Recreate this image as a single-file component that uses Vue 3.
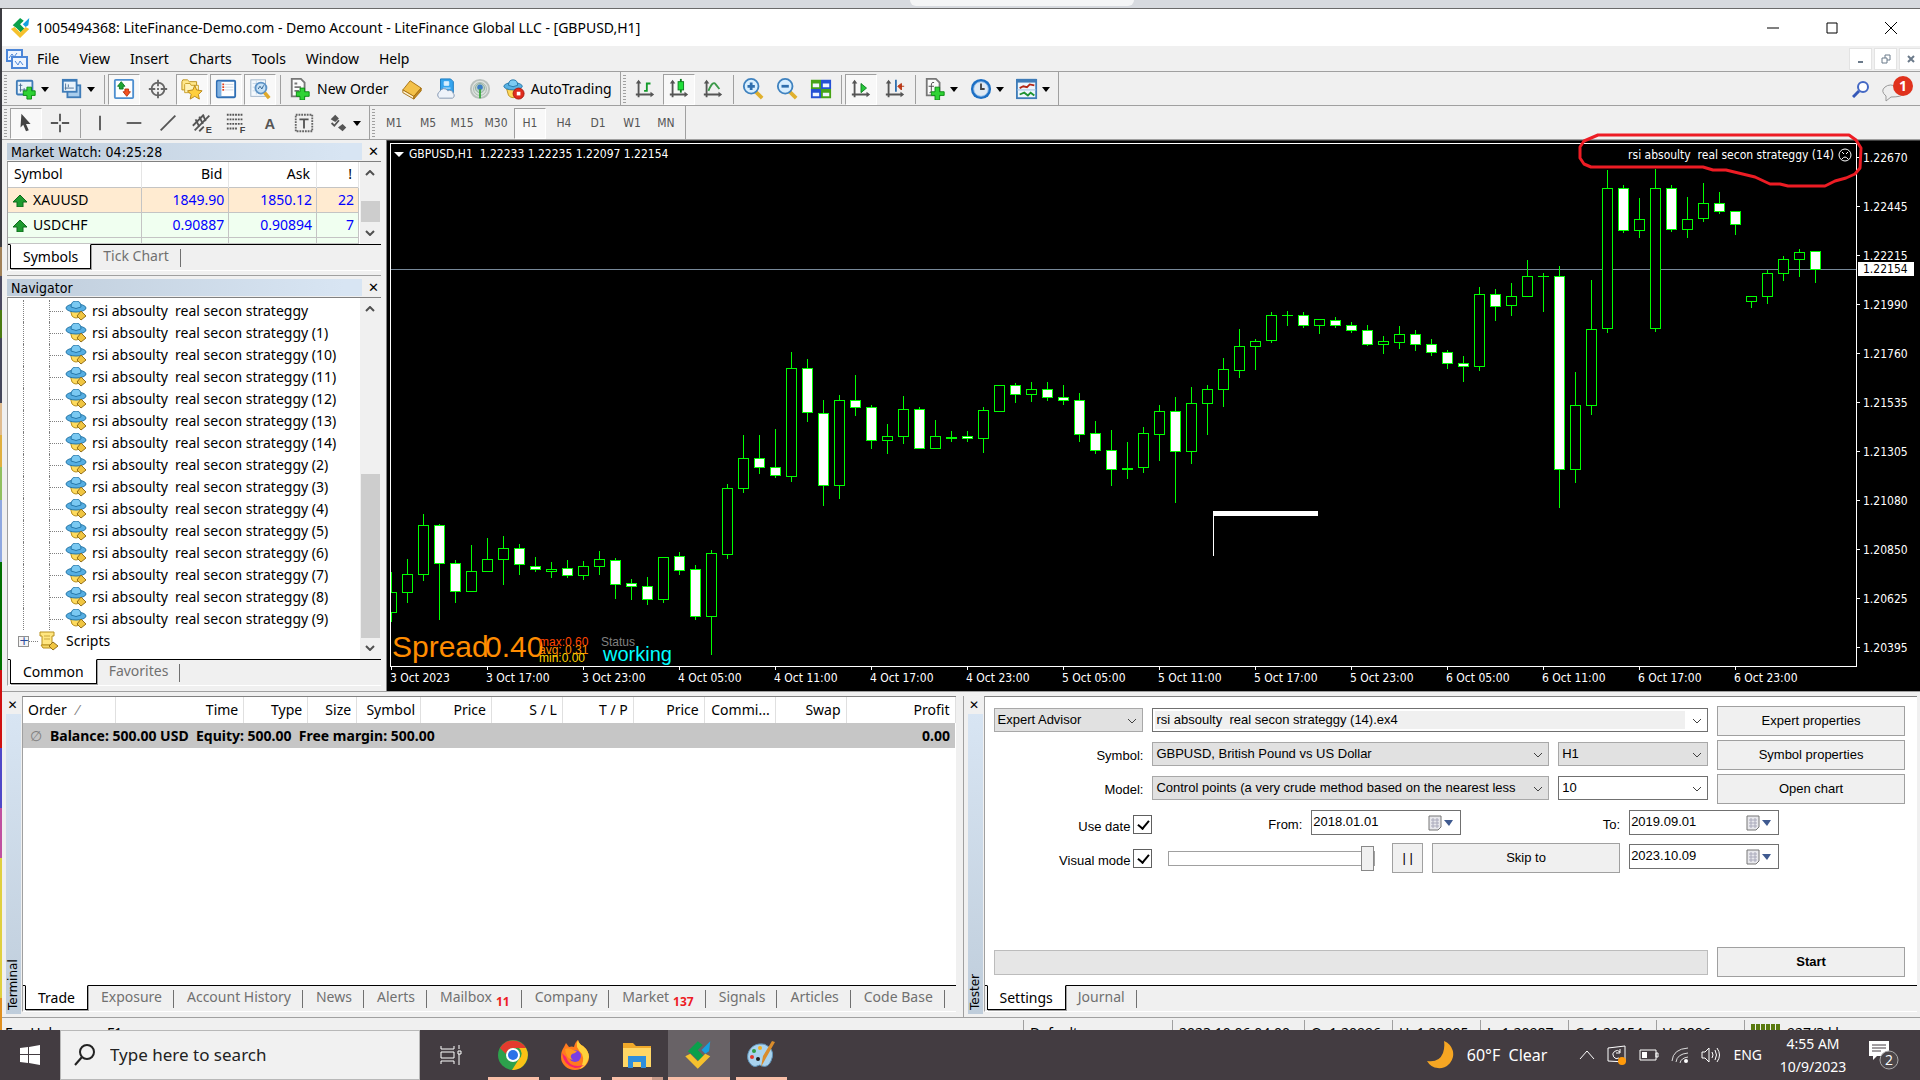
<script setup>
import { ref } from 'vue'

const menus = ['File', 'View', 'Insert', 'Charts', 'Tools', 'Window', 'Help']

const axes = '<path d="M5 4v17M2 18h17" stroke="#555" stroke-width="2"/><path d="M5 2l-3 4h6zM22 18l-4-3v6z" fill="#555"/>'
const win = '<rect x="2" y="3" width="17" height="15" rx="1" fill="#eaf3fb" stroke="#3f7cb8" stroke-width="2"/>'
const plus = '<path d="M13 10h5v4h4v5h-4v4h-5v-4H9v-5h4z" fill="#2fd334" stroke="#0a8a12"/>'
const icons = {
  newchart: win + '<path d="M6 6v9M5 13h9M4 8h4M10 11v4" stroke="#4a6f94"/>' + plus,
  profiles: '<rect x="7" y="8" width="14" height="13" fill="#a9cdec" stroke="#3f7cb8" stroke-width="2"/><rect x="2" y="2" width="15" height="13" fill="#eaf3fb" stroke="#3f7cb8" stroke-width="2"/><path d="M2 3h15" stroke="#3f7cb8" stroke-width="2"/><path d="M5 6v7M4 11h10M8 7v3" stroke="#4a6f94"/>',
  market: '<rect x="2" y="2" width="20" height="20" rx="1" fill="#fdfeff" stroke="#4d8fd0" stroke-width="2"/><path d="M9 4l4 5h-2v3H7V9H5z" fill="#1fa535" stroke="#0c7a1e"/><path d="M15 20l4-5h-2v-3h-4v3h-2z" fill="#f4511e" stroke="#b7320c"/>',
  target: '<circle cx="12" cy="12" r="7" fill="none" stroke="#666" stroke-width="2"/><path d="M12 2v7M12 15v7M2 12h7M15 12h7M12 11v2" stroke="#666" stroke-width="2"/>',
  navigator: '<path d="M1 4l1-2h5l2 2h8v9H1z" fill="#ffe88a" stroke="#b98d16"/><path d="M4 7l1-1h5l1 2h8v8H4z" fill="#fff3b8" stroke="#c79c25"/><path d="M15 8l2 5 6 1-4 4 1 5-5-3-5 3 1-5-4-4 6-1z" fill="#ffcf3d" stroke="#b58313"/>',
  terminal: '<rect x="2" y="3" width="20" height="18" rx="1" fill="#fdfeff" stroke="#2f6fb5" stroke-width="2"/><rect x="3" y="4" width="4" height="16" fill="#7fb2e3"/><path d="M8 7h2M8 10h2M8 13h2" stroke="#e2401c" stroke-width="2"/><path d="M11 7h9M11 10h9M11 13h9" stroke="#c9d4e0"/>',
  tester: '<rect x="2" y="2" width="16" height="18" fill="#f4f9fd" stroke="#9fb3c8"/><path d="M4 6h12M4 10h12M4 14h12M8 3v15" stroke="#c4d5e6"/><circle cx="13" cy="11" r="6" fill="#bcdcf5" fill-opacity=".8" stroke="#5d93c6" stroke-width="2"/><path d="M10 12l2-3 2 3 2-4" fill="none" stroke="#31618f"/><path d="M17 16l5 6" stroke="#e0a92b" stroke-width="4"/>',
  order: '<path d="M3 1h10l4 4v15H3z" fill="#fbfbfb" stroke="#777" stroke-width="2"/><path d="M6 6h3M6 10h7M6 14h5" stroke="#777" stroke-width="2"/><path d="M12 11h5v4h5v5h-5v4h-5v-4H8v-5h4z" fill="#2fd334" stroke="#0a8a12"/>',
  book: '<path d="M2 13L10 3l12 8-8 9z" fill="#f3c14a" stroke="#a46e10"/><path d="M2 13l12 7v3L2 16z" fill="#fff2cf" stroke="#a46e10"/><path d="M14 20l8-9v3l-8 9z" fill="#c68a1d" stroke="#a46e10"/>',
  news: '<path d="M6 1h11l3 3v12H6z" fill="#35a4ee" stroke="#1676bd"/><path d="M10 4h5v4h-5zM9 11h8" fill="#d8effe" stroke="#d8effe"/><path d="M5 22a4 4 0 010-7 5 5 0 019-1 4 4 0 016 3 3 3 0 01-1 5z" fill="#eef3fa" stroke="#7f93ae"/>',
  signal: '<circle cx="12" cy="12" r="10" fill="#dde2df" stroke="#b9c0bc" stroke-width="2"/><circle cx="12" cy="12" r="7" fill="none" stroke="#a3b3aa"/><circle cx="12" cy="11" r="5" fill="#b9cfc8" stroke="#8fab9a"/><circle cx="12" cy="10" r="3" fill="#3b7dc4"/><path d="M12 12v10" stroke="#39a83f" stroke-width="2"/>',
  auto: '<path d="M4 12h14l-2 7q-5 5-10 0z" fill="#ffd95b" stroke="#b88d1c"/><ellipse cx="11" cy="9" rx="10" ry="4" fill="#58b2e4" stroke="#2476a8"/><path d="M6 8q0-6 5-6t5 6q-5 3-10 0z" fill="#7ccbf3" stroke="#2476a8"/><circle cx="17" cy="17" r="6" fill="#e02b1d" stroke="#a5160c"/><path d="M15 15h4v4h-4z" fill="#fff"/>',
  bars: axes + '<path d="M14 5v10M14 6h4M11 14h3" stroke="#129a2a" stroke-width="2" fill="none"/>',
  candles: axes + '<path d="M14 1v15" stroke="#0b7d1d" stroke-width="2"/><rect x="11" y="4" width="6" height="9" fill="#1fe03a" stroke="#0b7d1d"/>',
  line: axes + '<path d="M7 14q5-12 8-7l4 5" stroke="#3c9a49" stroke-width="2" fill="none"/>',
  zoomin: '<path d="M14 14l8 8" stroke="#e0b02e" stroke-width="4"/><circle cx="10" cy="9" r="8" fill="#d8efff" stroke="#3f82bf" stroke-width="2"/><path d="M10 5v8M6 9h8" stroke="#2f6fae" stroke-width="3"/>',
  zoomout: '<path d="M14 14l8 8" stroke="#e0b02e" stroke-width="4"/><circle cx="10" cy="9" r="8" fill="#d8efff" stroke="#3f82bf" stroke-width="2"/><path d="M6 9h8" stroke="#2f6fae" stroke-width="3"/>',
  tile: '<path d="M1 2h11v10H1zM12 12h11v10H12z" fill="#47a316"/><path d="M12 2h11v10H12zM1 12h11v10H1z" fill="#2450d4"/><path d="M3 6h7v4H3zM14 6h7v4h-7zM3 16h7v4H3zM14 16h7v4h-7z" fill="#eef6ff"/>',
  scroll: axes + '<path d="M12 6l6 5-6 5z" fill="#27c83b" stroke="#0b7d1d"/>',
  shift: axes + '<path d="M13 2v13" stroke="#2f6fae" stroke-width="2"/><path d="M22 9h-5M19 6l-4 3 4 4z" fill="#d2401c" stroke="#b0300f"/>',
  indicator: '<path d="M3 1h10l4 4v14H3z" fill="#fbfbfb" stroke="#777" stroke-width="2"/><path d="M11 5q-3-1-3 3v6q0 2-2 2M5 9h6" stroke="#444" fill="none"/><path d="M12 10h5v5h5v4h-5v5h-5v-5H8v-4h4z" fill="#2fd334" stroke="#0a8a12"/>',
  clock: '<circle cx="12" cy="12" r="11" fill="#1c6fc4"/><circle cx="12" cy="12" r="8" fill="#dfe9f3" stroke="#88b8e8"/><path d="M12 6v6h4" stroke="#444" stroke-width="2" fill="none"/>',
  template: '<rect x="1" y="2" width="21" height="20" fill="#eef6fd" stroke="#3f7cb8" stroke-width="2"/><path d="M1 3h21" stroke="#3f7cb8" stroke-width="4"/><path d="M4 11l4-2 4 1 3-3 5 1" stroke="#b32615" stroke-width="2" fill="none"/><path d="M1 13h21" stroke="#9dbfe0"/><path d="M4 18l5-2 4 3 3-3 4 3" stroke="#1d9230" stroke-width="2" fill="none"/>',
  cursor: '<path d="M7 2l10 11h-5l3 7-3 1-3-7-3 3z" fill="#444"/>',
  cross: '<path d="M12 2v8M12 14v8M2 12h8M14 12h8" stroke="#555" stroke-width="2"/>',
  vline: '<path d="M12 4v16" stroke="#555" stroke-width="2"/>',
  hline: '<path d="M4 12h16" stroke="#555" stroke-width="2"/>',
  trend: '<path d="M4 20L20 4" stroke="#555" stroke-width="2"/>',
  channel: '<path d="M2 15L14 3M4 20L20 4M9 21l5-5" stroke="#555" stroke-width="2"/><path d="M5 8l4 8M9 5l4 8M13 3l3 7" stroke="#555" stroke-width="2"/><text x="16" y="23" font-size="10" font-weight="700" font-family="Liberation Sans, sans-serif" fill="#444">E</text>',
  fibo: '<path d="M2 3h18M2 8h18M2 13h18M2 18h12" stroke="#555" stroke-width="2" stroke-dasharray="2 1"/><text x="16" y="23" font-size="10" font-weight="700" font-family="Liberation Sans, sans-serif" fill="#444">F</text>',
  text: '<text x="6" y="18" font-size="16" font-weight="700" font-family="Liberation Sans, sans-serif" fill="#555">A</text>',
  label: '<rect x="3" y="3" width="18" height="18" fill="none" stroke="#666" stroke-width="2" stroke-dasharray="2 1"/><path d="M7 8h10M12 8v10" stroke="#555" stroke-width="2"/>',
  arrows: '<path d="M4 8l5-5 4 4-4 4zM12 17l5-4 4 4-4 4z" fill="#555"/><path d="M5 12l3 3 5-6" stroke="#555" stroke-width="2" fill="none"/>'
}

const standardBar = [
  { icon: 'newchart', caret: true }, { icon: 'profiles', caret: true }, { sep: true },
  { icon: 'market', on: true }, { icon: 'target' }, { icon: 'navigator', on: true }, { icon: 'terminal', on: true }, { icon: 'tester', on: true }, { sep: true },
  { icon: 'order', label: 'New Order' }, { icon: 'book' }, { icon: 'news' }, { icon: 'signal' }, { icon: 'auto', label: 'AutoTrading' }
]
const chartBar = [
  { icon: 'bars' }, { icon: 'candles', on: true }, { icon: 'line' }, { sep: true },
  { icon: 'zoomin' }, { icon: 'zoomout' }, { icon: 'tile' }, { sep: true },
  { icon: 'scroll', on: true }, { icon: 'shift' }, { sep: true },
  { icon: 'indicator', caret: true }, { icon: 'clock', caret: true }, { icon: 'template', caret: true }
]
const drawBar = [
  { icon: 'cursor', on: true }, { icon: 'cross' }, { sep: true },
  { icon: 'vline' }, { icon: 'hline' }, { icon: 'trend' }, { icon: 'channel' }, { icon: 'fibo' },
  { icon: 'text' }, { icon: 'label' }, { icon: 'arrows', caret: true }
]
const bars = [[standardBar, chartBar], [drawBar]]
const periods = ['M1', 'M5', 'M15', 'M30', 'H1', 'H4', 'D1', 'W1', 'MN']

const quotes = [
  { symbol: 'XAUUSD', bid: '1849.90', ask: '1850.12', spread: 22, cls: 'warm' },
  { symbol: 'USDCHF', bid: '0.90887', ask: '0.90894', spread: 7, cls: 'cool' }
]
const experts = ['', ' (1)', ' (10)', ' (11)', ' (12)', ' (13)', ' (14)', ' (2)', ' (3)', ' (4)', ' (5)', ' (6)', ' (7)', ' (8)', ' (9)']

// high, low, body top, body bottom, bearish
const TOP = 144
const candles = [
  [572, 621, 592, 612, 0], [559, 602, 574, 592, 0], [514, 580, 525, 574, 0], [524, 619, 525, 563, 1], [560, 602, 563, 591, 1],
  [545, 591, 571, 591, 0], [538, 571, 559, 571, 0], [536, 584, 548, 559, 0], [544, 574, 548, 564, 1], [557, 571, 566, 569, 1],
  [562, 577, 569, 571, 0], [560, 577, 568, 575, 1], [561, 579, 566, 575, 0], [551, 574, 559, 566, 0], [558, 598, 560, 584, 1],
  [579, 599, 583, 586, 1], [577, 604, 586, 599, 1], [557, 602, 557, 599, 0], [552, 574, 556, 570, 1], [565, 619, 569, 616, 1],
  [550, 654, 553, 616, 0], [484, 558, 488, 554, 0], [435, 492, 458, 488, 0], [435, 473, 458, 467, 1], [429, 477, 467, 475, 1],
  [352, 481, 368, 476, 0], [359, 421, 368, 412, 1], [400, 505, 413, 485, 1], [395, 498, 400, 485, 0], [375, 415, 400, 407, 1],
  [405, 448, 407, 440, 1], [424, 453, 436, 440, 0], [396, 443, 409, 436, 0], [407, 448, 409, 448, 1], [420, 448, 436, 448, 0],
  [431, 441, 437, 438, 0], [431, 441, 436, 438, 1], [407, 452, 410, 438, 0], [385, 411, 385, 411, 0], [383, 402, 385, 394, 1],
  [382, 401, 389, 394, 0], [382, 400, 389, 397, 1], [385, 404, 397, 400, 1], [393, 441, 400, 434, 1], [421, 453, 433, 450, 1],
  [430, 485, 450, 469, 1], [442, 478, 468, 469, 0], [427, 472, 433, 467, 0], [405, 460, 411, 434, 0], [397, 502, 411, 451, 1],
  [387, 463, 403, 451, 0], [385, 434, 389, 403, 0], [358, 406, 369, 389, 0], [329, 377, 346, 370, 0], [339, 369, 341, 346, 0],
  [312, 342, 315, 340, 0], [311, 325, 315, 315, 0], [312, 327, 315, 325, 1], [319, 333, 319, 325, 0], [317, 327, 320, 325, 1],
  [322, 332, 325, 330, 1], [325, 345, 330, 344, 1], [336, 353, 341, 344, 0], [326, 348, 334, 342, 0], [330, 350, 334, 344, 1],
  [339, 355, 344, 352, 1], [350, 368, 352, 363, 1], [356, 381, 363, 366, 1], [287, 370, 294, 366, 0], [289, 320, 294, 306, 1],
  [283, 315, 296, 305, 0], [260, 296, 276, 296, 0], [273, 311, 276, 276, 0], [266, 507, 276, 469, 1], [372, 482, 405, 469, 0],
  [280, 414, 329, 405, 0], [170, 332, 188, 328, 0], [185, 232, 188, 230, 1], [198, 237, 219, 230, 0], [169, 331, 188, 328, 0],
  [185, 231, 188, 229, 1], [197, 237, 219, 229, 0], [183, 221, 203, 218, 0], [192, 213, 203, 211, 1], [211, 234, 211, 224, 1],
  [296, 307, 296, 301, 0], [270, 303, 273, 296, 0], [256, 280, 259, 273, 0], [249, 276, 252, 259, 0], [251, 282, 251, 269, 1]
].map(([h, l, t, b, down], i) => ({ x: i * 16, h: h - TOP, l: l - TOP, t: t - TOP, b: b - TOP, down }))

const times = ['3 Oct 2023', '3 Oct 17:00', '3 Oct 23:00', '4 Oct 05:00', '4 Oct 11:00', '4 Oct 17:00', '4 Oct 23:00', '5 Oct 05:00', '5 Oct 11:00', '5 Oct 17:00', '5 Oct 23:00', '6 Oct 05:00', '6 Oct 11:00', '6 Oct 17:00', '6 Oct 23:00']
const prices = ['1.22670', '1.22445', '1.22215', '1.21990', '1.21760', '1.21535', '1.21305', '1.21080', '1.20850', '1.20625', '1.20395']

const orderCols = [
  ['Order', 93], ['Time', 128], ['Type', 64], ['Size', 49], ['Symbol', 64], ['Price', 71], ['S / L', 71],
  ['T / P', 71], ['Price', 71], ['Commi...', 71], ['Swap', 71], ['Profit', 109]
]
const terminalTabs = [['Exposure'], ['Account History'], ['News'], ['Alerts'], ['Mailbox', 11], ['Company'], ['Market', 137], ['Signals'], ['Articles'], ['Code Base']]

const status = ['Default', '2023.10.06 04:00', 'O: 1.20996', 'H: 1.22005', 'L: 1.20987', 'C: 1.22154', 'V: 2806']

const useDate = ref(true)
const visual = ref(true)
const speed = ref(100)
const expertFile = ref('rsi absoulty  real secon strateggy (14).ex4')
const dateFrom = ref('2018.01.01')
const dateTo = ref('2019.09.01')
const dateSkip = ref('2023.10.09')
</script>

<template>
  <div class="screen">
    <div class="behind"><span class="behind-tab"></span></div>
    <div class="middle">
      <div class="edge"></div>
      <div class="window">
        <header class="title">
          <svg class="logo" viewBox="0 0 24 24"><path d="M7 12L3 9l8-8 4 3-4 4 5 5-4 4z" fill="#0aa04b"/><path d="M14 8l7-7-1 8-3 2z" fill="#159fe0"/><path d="M1 13l4-2 6 6 6-6 4 2-10 10z" fill="#f5c12d"/></svg>
          <h1>1005494368: LiteFinance-Demo.com - Demo Account - LiteFinance Global LLC - [GBPUSD,H1]</h1>
          <div class="win-btns">
            <button aria-label="Minimize"><svg viewBox="0 0 12 12"><path d="M0 6h12" /></svg></button>
            <button aria-label="Maximize"><svg viewBox="0 0 12 12"><path d="M1 1h10v10H1z" /></svg></button>
            <button aria-label="Close"><svg viewBox="0 0 12 12"><path d="M0 0l12 12M12 0L0 12" /></svg></button>
          </div>
        </header>
        <nav class="menu">
          <svg class="menu-icon" viewBox="0 0 22 20"><rect x="1" y="1" width="15" height="11" fill="#eef5ff" stroke="#4c86d8" stroke-width="2"/><path d="M3 9l3-4 2 3 3-4" stroke="#4c86d8" fill="none"/><rect x="6" y="8" width="15" height="11" fill="#eef5ff" stroke="#4c86d8" stroke-width="2"/><path d="M9 12l3 4 2-4 3 4" stroke="#4c86d8" fill="none"/></svg>
          <button v-for="m in menus" :key="m">{{ m }}</button>
          <div class="mdi">
            <button aria-label="Minimize chart"><svg viewBox="0 0 10 10"><path d="M2 8h5" /></svg></button>
            <button aria-label="Restore chart"><svg class="thin" viewBox="0 0 10 10"><path d="M1 4h5v5H1zM4 4V1h5v5H6" /></svg></button>
            <button aria-label="Close chart"><svg viewBox="0 0 10 10"><path d="M2 2l6 6M8 2l-6 6" /></svg></button>
          </div>
        </nav>
        <div v-for="(row, r) in bars" :key="r" class="toolrow">
          <div v-for="(group, g) in row" :key="g" class="toolgroup">
            <i class="grip"></i>
            <template v-for="(t, i) in group" :key="i">
              <i v-if="t.sep" class="sep"></i>
              <button v-else class="tool" :class="{ on: t.on }" :aria-label="t.label || t.icon">
                <span class="cell"><svg viewBox="0 0 24 24" v-html="icons[t.icon]"></svg></span>
                <span v-if="t.label" class="tool-label">{{ t.label }}</span>
                <i v-if="t.caret" class="caret"></i>
              </button>
            </template>
          </div>
          <div v-if="r === 1" class="toolgroup">
            <i class="grip"></i>
            <button v-for="p in periods" :key="p" class="tool period" :class="{ on: p === 'H1' }"><span class="cell">{{ p }}</span></button>
          </div>
          <div v-if="r === 0" class="tool-right">
            <button aria-label="Search"><svg width="18" height="18" viewBox="0 0 18 18"><path d="M1 17l6-6" stroke="#3558b8" stroke-width="3"/><circle cx="11" cy="7" r="5" fill="#fff" stroke="#4468c4" stroke-width="2"/></svg></button>
            <button aria-label="Notifications"><svg width="34" height="28" viewBox="0 0 34 28"><path d="M5 12q5-4 12 0t6 7-12 3l-5 4v-5q-6-5-1-9z" fill="#eee" stroke="#999"/><circle cx="23" cy="11" r="10" fill="#e0321d"/><text x="23" y="16" text-anchor="middle" font-size="14" font-weight="700" fill="#fff" font-family="Open Sans, sans-serif">1</text></svg></button>
          </div>
        </div>

        <main class="work">
          <aside class="left">
            <section class="panel">
              <div class="panel-head"><h2>Market Watch: 04:25:28</h2><button aria-label="Close Market Watch">✕</button></div>
              <div class="panel-body">
                <div class="list">
                  <table class="quotes">
                    <colgroup><col style="width:38%" /><col style="width:25%" /><col style="width:25%" /><col /></colgroup>
                    <thead><tr><th>Symbol</th><th>Bid</th><th>Ask</th><th>!</th></tr></thead>
                    <tbody>
                      <tr v-for="q in quotes" :key="q.symbol" :class="q.cls">
                        <td><svg class="up" viewBox="0 0 14 12"><path d="M7 0l7 7h-4v5H4V7H0z" fill="#1d9a2e" stroke="#0d6b1b"/></svg>{{ q.symbol }}</td>
                        <td>{{ q.bid }}</td><td>{{ q.ask }}</td><td>{{ q.spread }}</td>
                      </tr>
                      <tr class="cool sliver"><td></td><td></td><td></td><td></td></tr>
                    </tbody>
                  </table>
                  <div class="scroll"><svg viewBox="0 0 10 6"><path d="M1 5l4-4 4 4"/></svg><i class="thumb market-thumb"></i><svg viewBox="0 0 10 6"><path d="M1 1l4 4 4-4"/></svg></div>
                </div>
                <div class="tabs"><button class="active">Symbols</button><button>Tick Chart</button></div>
              </div>
            </section>
            <section class="panel nav-panel">
              <div class="panel-head"><h2>Navigator</h2><button aria-label="Close Navigator">✕</button></div>
              <div class="panel-body">
                <div class="list">
                  <ul class="tree">
                    <li v-for="e in experts" :key="e" class="leaf">
                      <i class="branch"></i>
                      <svg viewBox="0 0 22 20"><path d="M5 8h11l-1 7q-4 4-8 0z" fill="#ffdb5c" stroke="#b8901f"/><ellipse cx="11" cy="7" rx="10" ry="4" fill="#56aee2" stroke="#2577a9"/><path d="M6 6q0-6 5-6t5 6q-5 3-10 0z" fill="#7ac9f2" stroke="#2577a9"/><path d="M16 10l5 5-5 4-4-4z" fill="#f0c541" stroke="#94701a"/></svg>
                      <span>rsi absoulty&nbsp; real secon strateggy{{ e }}</span>
                    </li>
                    <li class="root"><i class="expand">+</i><i class="dots"></i>
                      <svg viewBox="0 0 20 20"><path d="M1 1h14v4h-2v9H3V5H1z" fill="#ffe680" stroke="#b8901f"/><path d="M5 5h6M5 8h6" stroke="#c9a640"/><path d="M2 14h12v3H4z" fill="#f5d665" stroke="#b8901f"/><path d="M14 11l5 4-5 4-4-4z" fill="#f0c541" stroke="#94701a"/></svg>
                      <span>Scripts</span></li>
                  </ul>
                  <div class="scroll"><svg viewBox="0 0 10 6"><path d="M1 5l4-4 4 4"/></svg><i class="thumb nav-thumb"></i><svg viewBox="0 0 10 6"><path d="M1 1l4 4 4-4"/></svg></div>
                </div>
                <div class="tabs"><button class="active">Common</button><button>Favorites</button></div>
              </div>
            </section>
          </aside>

          <section class="chart">
            <div class="pane">
              <svg class="plot" viewBox="0 0 1465 522" preserveAspectRatio="xMinYMin slice">
                <rect x="0" y="125" width="1465" height="1" fill="#778899" />
                <g v-for="c in candles" :key="c.x">
                  <rect :x="c.x" :y="c.h" width="1" :height="c.l - c.h + 1" fill="#0f0" />
                  <rect :x="c.x - 5" :y="c.t" width="11" :height="c.b - c.t + 1" fill="#0f0" />
                  <rect v-if="c.b - c.t > 1" :x="c.x - 4" :y="c.t + 1" width="9" :height="c.b - c.t - 1" :fill="c.down ? '#fff' : '#000'" />
                </g>
                <path d="M822 367h105v5H823v40h-1z" fill="#fff" />
                <g class="osd">
                  <text x="1" y="513" font-size="30" fill="#ff8c00">Spread</text>
                  <text x="94" y="513" font-size="30" fill="#ff8c00">0.40</text>
                  <text x="148" y="502" font-size="12" fill="#ff4500">max:0.60</text>
                  <text x="148" y="510" font-size="12" fill="#ff8c00">avg: 0.31</text>
                  <text x="148" y="518" font-size="12" fill="#ffd700">min:0.00</text>
                  <text x="210" y="502" font-size="12" fill="#808080">Status</text>
                  <text x="212" y="517" font-size="20" fill="#0ff">working</text>
                </g>
              </svg>
              <div class="chart-title"><i class="white-caret"></i>GBPUSD,H1&nbsp; 1.22233 1.22235 1.22097 1.22154</div>
              <div class="expert-name">rsi absoulty&nbsp; real secon strateggy (14)
                <svg viewBox="0 0 14 14"><circle cx="7" cy="7" r="6" fill="none" stroke="#fff"/><path d="M4 4l2 2M10 4L8 6M4 11q3-4 6 0" stroke="#fff" fill="none"/></svg>
              </div>
              <svg class="marker" width="290" height="58" viewBox="0 0 290 58"><path d="M24 4h251l7 5 5 8-1 20-5 6-9 4-11 3-10 5h-37l-8-2h-10l-15-7-29-7h-13l-10-3H17l-7-3-4-6V16l4-6z" fill="none" stroke="#ed1c24" stroke-width="3" stroke-linejoin="round"/></svg>
            </div>
            <div class="prices"><span v-for="p in prices" :key="p">{{ p }}</span><b>1.22154</b></div>
            <div class="times"><span v-for="t in times" :key="t">{{ t }}</span></div>
          </section>
        </main>

        <div class="bottom">
          <section class="dock terminal">
            <div class="side"><button aria-label="Close Terminal">✕</button><h2>Terminal</h2></div>
            <div class="dock-body">
              <div class="sheet">
                <table class="orders">
                  <colgroup><col v-for="(c, i) in orderCols" :key="i" :style="{ width: c[1] / 9.33 + '%' }" /></colgroup>
                  <thead><tr><th v-for="(c, i) in orderCols" :key="i">{{ c[0] }}<i v-if="i === 0">⁄</i></th></tr></thead>
                  <tbody><tr><td colspan="11"><i class="zero">∅</i>Balance: 500.00 USD&nbsp; Equity: 500.00&nbsp; Free margin: 500.00</td><td>0.00</td></tr></tbody>
                </table>
              </div>
              <div class="tabs">
                <button class="active">Trade</button>
                <button v-for="t in terminalTabs" :key="t[0]">{{ t[0] }}<sub v-if="t[1]">{{ t[1] }}</sub></button>
              </div>
            </div>
          </section>
          <section class="dock tester">
            <div class="side"><button aria-label="Close Tester">✕</button><h2>Tester</h2></div>
            <div class="dock-body">
              <form class="sheet form" @submit.prevent>
                <div class="grid main-grid">
                  <span class="combo gray"><select aria-label="Program type"><option>Expert Advisor</option></select><svg viewBox="0 0 10 6"><path d="M1 1l4 4 4-4"/></svg></span>
                  <span class="combo file span2"><input v-model="expertFile" aria-label="Expert file" /><svg viewBox="0 0 10 6"><path d="M1 1l4 4 4-4"/></svg></span>
                  <button>Expert properties</button>
                  <label for="symbol">Symbol:</label>
                  <span class="combo gray"><select id="symbol"><option>GBPUSD, British Pound vs US Dollar</option></select><svg viewBox="0 0 10 6"><path d="M1 1l4 4 4-4"/></svg></span>
                  <span class="combo gray"><select aria-label="Period"><option>H1</option></select><svg viewBox="0 0 10 6"><path d="M1 1l4 4 4-4"/></svg></span>
                  <button>Symbol properties</button>
                  <label for="model">Model:</label>
                  <span class="combo gray"><select id="model"><option>Control points (a very crude method based on the nearest less</option></select><svg viewBox="0 0 10 6"><path d="M1 1l4 4 4-4"/></svg></span>
                  <span class="combo"><select aria-label="Spread"><option>10</option></select><svg viewBox="0 0 10 6"><path d="M1 1l4 4 4-4"/></svg></span>
                  <button>Open chart</button>
                </div>
                <div class="grid date-grid">
                  <label class="check">Use date<input v-model="useDate" type="checkbox" /></label>
                  <label for="from">From:</label>
                  <span class="combo date"><input id="from" v-model="dateFrom" /><svg viewBox="0 0 26 16"><path d="M1 1h12v11l-3 3H1z" fill="#e8e8ec" stroke="#777"/><path d="M3 5h8M3 8h8M3 11h8M5 3v10M9 3v10" stroke="#aab"/><path d="M16 5h9l-4 6z" fill="#3f5a90" stroke="none"/></svg></span>
                  <label for="to">To:</label>
                  <span class="combo date"><input id="to" v-model="dateTo" /><svg viewBox="0 0 26 16"><path d="M1 1h12v11l-3 3H1z" fill="#e8e8ec" stroke="#777"/><path d="M3 5h8M3 8h8M3 11h8M5 3v10M9 3v10" stroke="#aab"/><path d="M16 5h9l-4 6z" fill="#3f5a90" stroke="none"/></svg></span>
                  <i></i>
                  <label class="check">Visual mode<input v-model="visual" type="checkbox" /></label>
                  <div class="play">
                    <input v-model="speed" type="range" aria-label="Speed" />
                    <button class="pause">| |</button>
                    <button class="skip">Skip to</button>
                  </div>
                  <span class="combo date"><input v-model="dateSkip" aria-label="Skip to date" /><svg viewBox="0 0 26 16"><path d="M1 1h12v11l-3 3H1z" fill="#e8e8ec" stroke="#777"/><path d="M3 5h8M3 8h8M3 11h8M5 3v10M9 3v10" stroke="#aab"/><path d="M16 5h9l-4 6z" fill="#3f5a90" stroke="none"/></svg></span>
                </div>
                <div class="grid start-grid"><div class="progress"></div><button class="start">Start</button></div>
              </form>
              <div class="tabs"><button class="active">Settings</button><button>Journal</button></div>
            </div>
          </section>
        </div>
        <footer class="status"><span class="hint">For Help, press F1</span><span v-for="s in status" :key="s">{{ s }}</span><span><i class="traffic"></i>927/3 kb</span></footer>
      </div>
    </div>

    <div class="taskbar">
      <button class="start-btn" aria-label="Start"><svg width="20" height="20" viewBox="0 0 20 20"><path d="M0 3l8-1v7H0zM9 2l11-2v9H9zM0 10h8v8l-8-1zM9 10h11v10L9 18z" fill="#fff"/></svg></button>
      <div class="search"><svg width="22" height="22" viewBox="0 0 22 22"><circle cx="13" cy="8" r="7" fill="none" stroke="#222" stroke-width="2"/><path d="M8 13l-7 8" stroke="#222" stroke-width="2"/></svg><input placeholder="Type here to search" aria-label="Search" /></div>
      <button class="task" aria-label="Task view"><svg width="22" height="20" viewBox="0 0 22 20"><path d="M1 1v3h13V1M1 19v-3h13v3M1 7h13v6H1zM19 0v4M19 9v11M18 6h3v3h-3z" fill="none" stroke="#fff" stroke-width="1"/></svg></button>
      <button class="task open" aria-label="Chrome"><svg width="30" height="30" viewBox="0 0 30 30"><circle cx="15" cy="15" r="15" fill="#2da14c"/><path d="M2 8a15 15 0 0126 0H15a7 7 0 00-7 6z" fill="#e33b2e"/><path d="M28 8a15 15 0 01-14 22l7-11a7 7 0 000-11z" fill="#fbc116"/><circle cx="15" cy="15" r="7" fill="#fff"/><circle cx="15" cy="15" r="5" fill="#2a72e8"/></svg></button>
      <button class="task open" aria-label="Firefox"><svg width="30" height="30" viewBox="0 0 30 30"><path d="M4 7l2-4 3 4q3-1 5 0 1-5 4-7 1 4 5 6 6 5 6 11a14 13 0 01-28 0Q1 11 4 7z" fill="#ff7a1e"/><path d="M18 0q1 4 5 6 6 5 6 11-2 9-9 12 5-8 2-15-3-3-5-7-1-4 1-7z" fill="#ffd03b"/><path d="M2 13q2 13 13 15 6 0 9-3-14 4-18-8z" fill="#f7256b"/><circle cx="15" cy="16" r="6" fill="#7a3fe0"/><path d="M5 9q4-2 8 1l4 1q-2 3-5 3-3 3 1 6-7-1-8-11z" fill="#ff9a1e"/></svg></button>
      <button class="task open split" aria-label="File Explorer"><svg width="30" height="26" viewBox="0 0 30 26"><path d="M1 3V1h10l3 3h15v20H1z" fill="#f0a92a"/><path d="M1 6h28v19H1z" fill="#ffd766"/><path d="M6 14h18v12h-5v-6h-8v6H6z" fill="#2f8fdc"/></svg></button>
      <button class="task open active" aria-label="LiteFinance"><svg width="30" height="30" viewBox="0 0 24 24"><path d="M7 12L3 9l8-8 4 3-4 4 5 5-4 4z" fill="#0aa04b"/><path d="M14 8l7-7-1 8-3 2z" fill="#159fe0"/><path d="M1 13l4-2 6 6 6-6 4 2-10 10z" fill="#f5c12d"/></svg></button>
      <button class="task open" aria-label="Paint"><svg width="30" height="30" viewBox="0 0 30 30"><path d="M13 4C4 5-1 15 3 22q4 6 8 4 3-2 5 0 6 2 9-5 4-9-2-14-4-4-10-3z" fill="#a9d3ee" stroke="#5f93b8"/><circle cx="8" cy="11" r="2" fill="#2f9e44"/><circle cx="14" cy="8" r="2" fill="#f2b01e"/><circle cx="6" cy="17" r="2" fill="#e2382b"/><circle cx="12" cy="19" r="2" fill="#222"/><path d="M26 1l3 1-9 16-5 9 2-11z" fill="#d98c2b"/></svg></button>
      <div class="tray">
        <svg width="28" height="28" viewBox="0 0 28 28"><path d="M17 0a14 14 0 11-17 20Q12 22 16 12q2-6 1-12z" fill="#f6a623"/></svg>
        <span class="weather">60°F&nbsp; Clear</span>
        <svg class="chev" width="16" height="10" viewBox="0 0 16 10"><path d="M1 9l7-8 7 8" fill="none" stroke="#fff"/></svg>
        <svg width="20" height="20" viewBox="0 0 20 20"><path d="M1 3l17-2v16L1 16zM13 7a4 4 0 10-1 6M13 4v4h-4" fill="none" stroke="#fff"/><circle cx="15" cy="16" r="4" fill="#ff9a0a"/></svg>
        <svg width="20" height="12" viewBox="0 0 20 12"><path d="M1 1h16v10H1zM17 4h2v4h-2z" fill="none" stroke="#fff"/><path d="M3 3h5v6H3z" fill="#fff"/></svg>
        <svg width="18" height="18" viewBox="0 0 18 18"><path d="M1 15Q2 3 17 2M5 16q1-8 12-9M9 17q1-5 8-6" fill="none" stroke="#ddd"/><circle cx="15" cy="15" r="2" fill="#fff"/></svg>
        <svg width="20" height="16" viewBox="0 0 20 16"><path d="M1 5h3l4-4v14l-4-4H1zM11 5q2 3 0 6M14 3q3 5 0 10M16 1q5 7 0 14" fill="none" stroke="#fff"/></svg>
        <span class="lang">ENG</span>
        <time>4:55 AM<br />10/9/2023</time>
        <svg class="note" width="32" height="32" viewBox="0 0 32 32"><path d="M1 2h20v15H9l-4 4v-4H1z" fill="#fff"/><path d="M4 6h14M4 9h14M4 12h9" stroke="#443d42"/><circle cx="21" cy="21" r="9" fill="#4c474a" stroke="#aaa"/><text x="21" y="26" text-anchor="middle" font-size="14" fill="#fff" font-family="Open Sans, sans-serif">2</text></svg>
      </div>
    </div>
  </div>
</template>

<style>
body { margin: 0; }
</style>

<style scoped>
.screen { min-height: 100vh; display: flex; flex-direction: column; background: #f0f0f0; color: #000; font: 14px/20px "Noto Sans", "Open Sans", sans-serif; overflow: hidden; }
.screen * { box-sizing: border-box; }
i { font-style: normal; }
h1, h2 { margin: 0; font-weight: 400; white-space: nowrap; }
button { font: inherit; color: inherit; background: none; border: 0; padding: 0; margin: 0; }
input, select { font: inherit; color: inherit; margin: 0; border: 0; padding: 0; background: none; outline: 0; min-width: 0; }
svg { display: block; flex: none; }

.behind { height: 8px; background: #d7dadf; display: flex; justify-content: center; }
.behind-tab { width: 224px; margin-left: 124px; height: 6px; background: #f4f5f6; border-radius: 0 0 6px 6px; }
.middle { flex: 1; display: flex; }
.edge { width: 2px; background: linear-gradient(#3c3c42 0 239px, #a08058 0 268px, #4b4960 0 302px, #4a7a10 0 330px, #44465a 0 395px, #e0bc90 0 427px, #e0b040 0 459px, #90c060 0 492px, #8fa8e0 0 554px, #007000 0 662px, #d01010 0 740px, #5048c8 0 800px, #c050a0 0 850px, #e0d040 0 990px, #e09020 0); }
.window { flex: 1; min-width: 0; display: flex; flex-direction: column; border-top: 1px solid #6a6a6a; }

.title { height: 37px; background: #fff; display: flex; align-items: center; padding-left: 8px; }
.logo { width: 22px; height: 22px; }
.title h1 { margin-left: 4px; font-size: 14px; flex: 1; }
.win-btns { display: flex; }
.win-btns button { width: 59px; display: grid; place-items: center; }
.win-btns svg { width: 12px; height: 12px; fill: none; stroke: #000; }

.menu { height: 26px; display: flex; align-items: center; padding-left: 4px; border-bottom: 1px solid #a0a0a0; }
.menu-icon { width: 22px; height: 20px; margin-right: -1px; }
.menu button { padding: 0 10px; }
.mdi { margin-left: auto; display: flex; gap: 2px; margin-right: -2px; }
.menu .mdi button { width: 23px; height: 22px; padding: 0; background: #fff; border: 1px solid #e3e3e3; display: grid; place-items: center; }
.mdi svg { width: 10px; height: 10px; fill: none; stroke: #6b7a8a; stroke-width: 2; }
.mdi .thin { stroke-width: 1; }

.toolrow { height: 34px; display: flex; border-bottom: 1px solid #a0a0a0; }
.toolgroup { display: flex; align-items: center; padding: 1px 2px 0 0; border-right: 1px solid #a0a0a0; }
.grip { width: 3px; height: 28px; margin: 0 2px 0 2px; background: repeating-linear-gradient(#a0a0a0 0 1px, #f0f0f0 1px 3px); }
.sep { width: 1px; height: 29px; margin: 0 2px 0 3px; background: #a0a0a0; }
.tool { height: 31px; display: flex; align-items: center; }
.cell { width: 34px; height: 31px; display: grid; place-items: center; }
.cell svg { width: 22px; height: 22px; }
.on .cell { width: 32px; margin: 0 1px; background: #f8f8f8; border: 1px solid #a0a0a0; border-right-color: #fff; border-bottom-color: #fff; }
.tool-label { margin-right: 6px; white-space: nowrap; }
.caret { border: 4px solid transparent; border-top: 5px solid #000; border-bottom: 0; margin: 0 6px 0 -2px; }
.period { font: 12px/16px "DejaVu Sans Condensed", "Noto Sans", sans-serif; color: #555; }
.tool-right { margin-left: auto; display: flex; align-items: center; gap: 10px; padding-right: 6px; }

.work { height: 551px; display: flex; }
.left { width: 385px; padding: 3px 5px 5px; border-right: 1px solid #808080; display: flex; flex-direction: column; gap: 4px; }
.panel { display: flex; flex-direction: column; }
.nav-panel { flex: 1; border-top: 1px solid #a0a0a0; padding-top: 3px; }
.panel-head { height: 17px; display: flex; align-items: center; justify-content: space-between; background: linear-gradient(90deg, #bfcddb, #d8e5f3 95%) no-repeat 0 0 / calc(100% - 19px) 100%; }
.panel-head h2 { font: 14px/16px "DejaVu Sans Condensed", "Noto Sans", sans-serif; padding-left: 4px; }
.panel-head button { font: 13px/16px "DejaVu Sans", sans-serif; width: 15px; }
.panel-body { flex: 1; display: flex; flex-direction: column; margin-top: 1px; border-top: 1px solid #808080; border-left: 1px solid #a0a0a0; border-bottom: 1px solid #fff; }
.list { flex: 1; display: flex; background: #fff; border-bottom: 1px solid #000; overflow: hidden; }
.scroll { width: 22px; background: #f0f0f0; display: flex; flex-direction: column; align-items: center; justify-content: space-between; padding: 8px 2px 8px 1px; border-left: 1px solid #fff; }
.scroll svg { width: 10px; height: 6px; fill: none; stroke: #505050; stroke-width: 2; }
.thumb { width: 19px; background: #cdcdcd; }
.market-thumb { height: 21px; margin-top: 16px; }
.nav-thumb { height: 164px; margin-top: auto; margin-bottom: 7px; }
.quotes { flex: 1; border-collapse: collapse; table-layout: fixed; height: 82px; }
.quotes th { height: 25px; font-weight: 400; text-align: right; padding: 0 6px; border-right: 1px solid #e5e5e5; }
.quotes th:first-child { text-align: left; }
.quotes td { height: 25px; padding: 0 4px; text-align: right; color: #00f; border: solid #c4c4c4; border-width: 1px 1px 1px 0; }
.quotes td:first-child { text-align: left; color: #000; }
.quotes .sliver td { height: 6px; }
.warm { background: #ffebd1; }
.cool { background: #f0fff0; }
.up { display: inline-block; width: 14px; height: 12px; margin: 0 6px 0 1px; vertical-align: -2px; }
.tabs { height: 26px; display: flex; align-items: stretch; margin-top: -1px; padding-left: 2px; color: #707070; }
.tabs button { position: relative; padding: 0 12px; height: 24px; white-space: nowrap; }
.terminal .tabs button:not(.active) { padding: 0 12px 0 13px; }
.tabs button:not(.active)::after { content: ""; position: absolute; right: 0; top: 5px; bottom: 1px; width: 1px; background: #707070; }
.tabs .active { background: #fff; color: #000; border: 1px solid #000; border-top-color: #fff; height: 25px; box-shadow: 1px 1px 0 #a0a0a0; }
.tabs sub { color: #ed1c24; font-size: 12px; font-weight: 700; line-height: 0; margin-left: 4px; vertical-align: -4px; }
.tree { flex: 1; list-style: none; margin: 0; padding: 2px 0 5px 15px; }
.tree li { height: 22px; display: flex; align-items: center; white-space: pre; }
.leaf { border-left: 1px dotted #808080; }
.branch { width: 15px; height: 22px; margin-left: 25px; border-left: 1px dotted #808080; background: repeating-linear-gradient(90deg, #808080 0 1px, #fff 1px 2px) no-repeat 0 11px / 100% 1px; }
.leaf svg { width: 22px; height: 20px; margin-right: 5px; margin-left: 1px; }
.root svg { width: 20px; height: 20px; margin-right: 7px; }
.expand { width: 11px; height: 11px; margin-left: -5px; border: 1px solid #909090; background: #f4f4f4; color: #2a4a9a; font: 12px/8px "DejaVu Sans", sans-serif; text-align: center; }
.dots { width: 9px; height: 1px; background: repeating-linear-gradient(90deg, #808080 0 1px, #fff 1px 2px); margin-right: 1px; }

.chart { flex: 1; min-width: 0; background: #000; border-top: 1px solid #404040; padding: 2px 0 0 3px; display: grid; grid-template: 524px 1fr / 1fr 63px; color: #fff; font: 12px/14px "DejaVu Sans Condensed", "Noto Sans", sans-serif; }
.pane { position: relative; border: 1px solid #fff; min-width: 0; }
.plot { width: 100%; height: 522px; shape-rendering: crispEdges; }
.osd { font-family: "Liberation Sans", Arial, sans-serif; }
.chart-title { position: absolute; left: 3px; top: 3px; display: flex; align-items: center; gap: 5px; }
.white-caret { border: 5px solid transparent; border-top-color: #fff; border-bottom: 0; }
.expert-name { position: absolute; right: 4px; top: 4px; display: flex; align-items: center; gap: 4px; }
.expert-name svg { width: 14px; height: 14px; }
.marker { position: absolute; right: -8px; top: -13px; z-index: 2; }
.prices { position: relative; padding-top: 8px; display: flex; flex-direction: column; gap: 35px; }
.prices span { height: 14px; padding-left: 6px; background: linear-gradient(#fff, #fff) no-repeat 0 6px / 3px 1px; }
.prices b { position: absolute; left: 1px; top: 119px; height: 14px; width: 56px; padding-left: 5px; font-weight: 400; background: #fff; color: #000; }
.times { display: flex; overflow: hidden; }
.times span { width: 96px; flex: none; padding-top: 4px; background: linear-gradient(#fff, #fff) no-repeat 1px 0 / 1px 3px; }

.bottom { flex: 1; display: flex; border-top: 1px solid #a0a0a0; padding-top: 4px; background: #f0f0f0; }
.dock { display: flex; padding: 0 3px; min-width: 0; }
.terminal { flex: 1; border-right: 1px solid #a0a0a0; padding-right: 7px; }
.tester { flex: 1; }
.side { width: 17px; padding-bottom: 3px; display: flex; flex-direction: column; align-items: center; }
.side button { font: 12px/16px "DejaVu Sans", sans-serif; height: 18px; margin-right: 2px; }
.side h2 { flex: 1; width: 15px; writing-mode: vertical-rl; transform: rotate(180deg); font: 12px/15px "DejaVu Sans", sans-serif; padding-top: 4px; background: linear-gradient(0deg, #d8e5f3, #bfcddb); }
.dock-body { flex: 1; min-width: 0; display: flex; flex-direction: column; border-top: 1px solid #808080; border-left: 1px solid #a0a0a0; border-bottom: 1px solid #fff; margin-bottom: 5px; }
.sheet { flex: 1; background: #fff; border-bottom: 1px solid #000; }
.orders { width: 100%; table-layout: fixed; border-collapse: collapse; }
.orders th { height: 26px; font-weight: 400; text-align: right; padding: 0 5px; border-right: 1px solid #e0e0e0; white-space: nowrap; }
.orders th:first-child { text-align: left; }
.orders th i { margin-left: 10px; color: #808080; }
.orders td { height: 25px; padding: 0 5px; background: #c6c6c6; font-weight: 700; text-align: right; }
.orders td:first-child { text-align: left; padding-left: 7px; }
.zero { color: #808080; font-weight: 400; margin-right: 8px; }

.form { font: 13px/16px "Liberation Sans", Arial, sans-serif; padding: 9px 12px 8px 9px; display: flex; flex-direction: column; gap: 4px; }
.grid { display: grid; gap: 4px 9px; align-items: center; }
.main-grid { grid-template-columns: 150fr 397fr 150fr 188fr; }
.date-grid { grid-template-columns: 159fr 141fr 150fr 150fr 150fr 117fr; margin-top: 1px; }
.span2 { grid-column: span 2; }
.form button { height: 30px; border: 1px solid #a0a0a0; background: #f0f0f0; text-align: center; }
.form label { text-align: right; padding-top: 2px; }
.combo { position: relative; height: 24px; display: flex; border: 1px solid #707070; background: #fff; margin-bottom: 2px; }
.combo.gray { background: #e1e1e1; border-color: #a8a8a8; }
.combo select, .combo input { width: 100%; appearance: none; padding: 0 3px; }
.combo select { padding-right: 22px; }
.combo svg { position: absolute; right: 5px; top: 9px; width: 10px; height: 6px; fill: none; stroke: #404040; pointer-events: none; }
.file input { margin: 2px 22px 2px 2px; background: #f0f0f0; padding: 0 1px; }
.combo.date { height: 25px; margin-bottom: 4px; }
.date input { padding: 0 1px; }
.combo.date svg { right: 6px; top: 4px; width: 26px; height: 16px; }
.form .check { display: flex; align-items: center; justify-content: flex-end; gap: 3px; height: 30px; padding-top: 5px; }
.check input { appearance: none; width: 19px; height: 19px; border: 1px solid #606060; background: #fff; position: relative; margin-top: -5px; }
.check input:checked::after { content: ""; position: absolute; left: 6px; top: 2px; width: 5px; height: 9px; border: solid #000; border-width: 0 2px 2px 0; transform: rotate(40deg); }
.play { grid-column: span 3; display: flex; align-items: center; padding-left: 7px; }
.play input { flex: 209; height: 27px; appearance: none; margin-right: 17px; background: linear-gradient(#a0a0a0, #a0a0a0) no-repeat 0 6px / 100% 15px; position: relative; }
.play input::-webkit-slider-runnable-track { height: 13px; margin: 0 1px; background: #fff; }
.play input::-webkit-slider-thumb { appearance: none; width: 13px; height: 25px; margin-top: -6px; background: #f0f0f0; border: 1px solid #888; }
.pause { flex: 29; margin-right: 9px; }
.skip { flex: 188; }
.start-grid { grid-template-columns: 715fr 188fr; margin-top: auto; }
.progress { height: 25px; background: #e6e6e6; border: 1px solid #bcbcbc; }
.form .start { font-weight: 700; }

.status { height: 13px; border-top: 1px solid #a0a0a0; display: flex; overflow: hidden; line-height: 17px; padding-top: 2px; }
.status span { flex: none; width: 88px; padding: 4px 0 0 6px; border-left: 1px solid #a0a0a0; white-space: nowrap; }
.status .hint { flex: 1; border: 0; padding-left: 3px; }
.status span:nth-child(2) { width: 149px; }
.status span:nth-child(3) { width: 132px; }
.status span:last-child { width: 176px; display: flex; gap: 6px; }
.traffic { width: 30px; height: 12px; background: repeating-linear-gradient(90deg, #5a7a10 0 4px, #f0f0f0 4px 5px); }

.taskbar { height: 50px; background: #433c41; display: flex; color: #fff; }
.start-btn { width: 60px; display: grid; place-items: center; }
.search { width: 360px; background: #f1f1f1; border: 1px solid #b8b8b8; display: flex; align-items: center; padding-left: 13px; gap: 14px; }
.search input { flex: 1; font-size: 17px; color: #222; }
.search input::placeholder { color: #222; opacity: 1; }
.task { width: 62px; display: grid; place-items: center; position: relative; }
.task.open::after { content: ""; position: absolute; left: 6px; right: 5px; bottom: 0; height: 3px; background: #f9bfa8; }
.task.split::after { background: linear-gradient(90deg, #f9bfa8 40px, #c89a8a 0); }
.task.active { background: #686266; }
.task.active::after { left: 0; right: 0; }
.tray { margin-left: auto; display: flex; align-items: center; gap: 12px; padding-right: 20px; }
.weather { font-size: 16px; white-space: nowrap; margin-right: 20px; }
.lang { font-size: 14px; }
time { width: 78px; text-align: center; font-size: 14px; line-height: 23px; }
.note { margin-left: 4px; }
</style>
